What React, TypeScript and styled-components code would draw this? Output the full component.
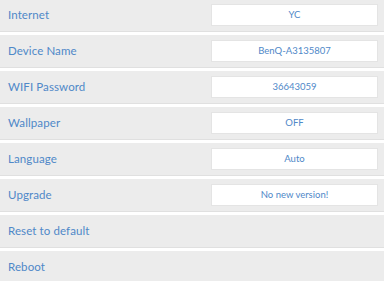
import React from 'react';
import styled, {createGlobalStyle} from "styled-components";

const GlobalStyle = createGlobalStyle`
  body {
    margin: 0;
    background: #ffffff;
    font-family: "Lato", "DejaVu Sans", sans-serif;
  }
`

type Item = { label: string, value?: string }

const items: Item[] = [
    {label: "Internet", value: "YC"},
    {label: "Device Name", value: "BenQ-A3135807"},
    {label: "WIFI Password", value: "36643059"},
    {label: "Wallpaper", value: "OFF"},
    {label: "Language", value: "Auto"},
    {label: "Upgrade", value: "No new version!"},
    {label: "Reset to default"},
    {label: "Reboot"},
]

export default function App() {
    return (
        <>
            <GlobalStyle/>
            <SettingsList>
                {items.map(item => (
                    <Row key={item.label}>
                        <Label>{item.label}</Label>
                        {item.value && <ValueBox>{item.value}</ValueBox>}
                    </Row>
                ))}
            </SettingsList>
        </>
    );
}

const SettingsList = styled.div`
  width: 384px;
  height: 282px;
  margin-top: -1px;
  overflow: hidden;
  display: flex;
  flex-direction: column;
  gap: 3px;
  background: #ffffff;
`

const Row = styled.div`
  flex: 0 0 auto;
  height: 33px;
  box-sizing: border-box;
  display: flex;
  align-items: center;
  justify-content: space-between;
  padding: 0 6px 1px 8px;
  background: #ececec;
  border-bottom: 1px solid #e0e0e0;
`

const Label = styled.span`
  font-size: 11.5px;
  color: #4f88c8;
  letter-spacing: 0.1px;
`

const ValueBox = styled.div`
  width: 167px;
  height: 22px;
  box-sizing: border-box;
  display: flex;
  align-items: center;
  justify-content: center;
  background: #ffffff;
  border: 1px solid #e4e4e4;
  font-size: 9.5px;
  color: #4f88c8;
`
